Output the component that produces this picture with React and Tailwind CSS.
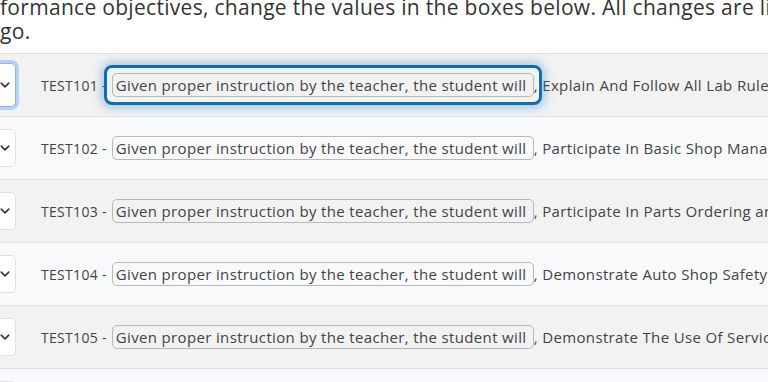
import React from 'react';

const ROWS = [
  { code: 'TEST101', rest: 'Explain And Follow All Lab Rules And Procedures', focused: true },
  { code: 'TEST102', rest: 'Participate In Basic Shop Management Activities' },
  { code: 'TEST103', rest: 'Participate In Parts Ordering and Inventory' },
  { code: 'TEST104', rest: 'Demonstrate Auto Shop Safety Practices' },
  { code: 'TEST105', rest: 'Demonstrate The Use Of Service Information' },
  { code: 'TEST106', rest: 'Identify Tools And Their Usage' },
];

const Chevron = () => (
  <svg width="10" height="10" viewBox="0 0 16 16" fill="none" stroke="#343a40" strokeWidth="2.6" strokeLinecap="round" strokeLinejoin="round">
    <path d="M2 5l6 6 6-6" />
  </svg>
);

const Row = ({ row, index }) => {
  const odd = index % 2 === 0;
  return (
    <div className={`h-[63px] border-t border-[#dee2e6] flex items-center whitespace-nowrap ${odd ? 'bg-[#f2f2f2]' : 'bg-[#f8f9fb]'}`}>
      {/* select, scrolled off to the left */}
      <div
        className={`-ml-[30px] w-[46px] rounded-[5px] bg-white flex items-center justify-end pr-[5px] shrink-0 ${
          row.focused
            ? 'border border-[#86b7fe] shadow-[0_0_0_3px_rgba(13,110,253,0.25)] h-[44px]'
            : 'border border-[#dee2e6] h-[38px]'
        }`}
      >
        <Chevron />
      </div>
      <span className="ml-[25px] text-[14px] tracking-[0.3px] text-[#444]">{row.code} -</span>
      <span className="relative ml-[5px]">
        {row.focused && (
          <span className="absolute -inset-[8px] rounded-[8px] border-[3px] border-[#0f6db3] shadow-[0_0_10px_3px_rgba(30,120,190,0.35)]" />
        )}
        <input
          readOnly
          value="Given proper instruction by the teacher, the student will"
          className="relative block w-[422px] h-[24px] px-[3px] rounded-[5px] border border-[#b8b8b8] bg-transparent text-[15px] tracking-[0.35px] text-[#444] outline-none font-['Open_Sans',sans-serif]"
        />
      </span>
      <span className="text-[15px] tracking-[0.35px] text-[#444]">, {row.rest}</span>
    </div>
  );
};

export default function App() {
  return (
    <div className="w-[768px] h-[382px] overflow-hidden bg-white font-['Open_Sans',sans-serif]">
      <div className="-mt-[5px] mb-[10px] text-[21px] leading-[24px] tracking-[0.3px] text-[#333] whitespace-nowrap">
        <div>formance objectives, change the values in the boxes below. All changes are live as you</div>
        <div>go.</div>
      </div>
      {ROWS.map((row, i) => (
        <Row key={row.code} row={row} index={i} />
      ))}
    </div>
  );
}
